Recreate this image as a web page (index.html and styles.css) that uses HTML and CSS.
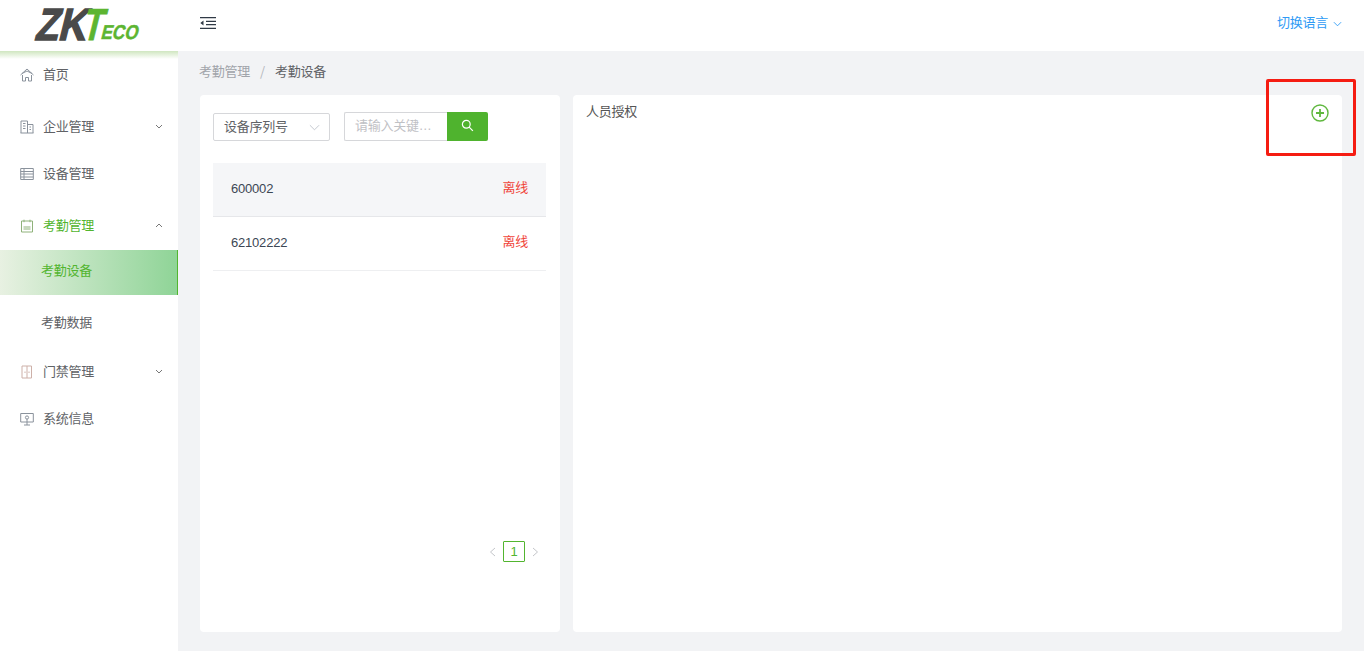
FILE: index.html
```html
<!DOCTYPE html>
<html lang="zh">
<head>
<meta charset="utf-8">
<title>考勤设备</title>
<link rel="stylesheet" href="styles.css">
</head>
<body>
<div class="app">
  <aside class="sidebar">
    <div class="logo">
      <svg width="178" height="51" viewBox="0 0 178 51">
        <g transform="translate(0 39.500) skewX(-14)">
          <text class="logo-zk" x="34" y="0" textLength="51" lengthAdjust="spacingAndGlyphs">ZK</text>
          <text class="logo-t" x="81" y="0" textLength="20" lengthAdjust="spacingAndGlyphs">T</text>
          <text class="logo-eco" x="100" y="-1" textLength="37" lengthAdjust="spacingAndGlyphs">ECO</text>
        </g>
      </svg>
    </div>
    <nav class="menu">
      <a class="item first">
        <svg class="ico" viewBox="0 0 14 14"><path d="M.5 7 7 1l6.500 6M2 5.500 7 3l5 2.500M2.500 7v6h3V9.500h3V13h3V7"/></svg><span class="label">首页</span>
      </a>
      <a class="item gap">
        <svg class="ico" viewBox="0 0 14 14"><path d="M1 13V1h6.500v12M7.500 4.500H13V13M.5 13h13M3 3.500h2.500M3 6h2.500M3 8.500h2.500M9.500 7h1.500M9.500 9.500h1.500"/></svg><span class="label">企业管理</span>
        <svg class="caret" viewBox="0 0 8 5"><path d="m1 1 3 3 3-3"/></svg>
      </a>
      <a class="item">
        <svg class="ico" viewBox="0 0 14 14"><path d="M.7 1.500h12.600v11H.7zM.7 4.500h12.600M.7 7h12.600M.7 10h12.600M4 1.500v11"/></svg><span class="label">设备管理</span>
      </a>
      <a class="item gap active">
        <svg class="ico" viewBox="0 0 14 14"><path d="M1.500 2h11v11h-11zM4 .7v2.500M10 .7v2.500M3.500 8h7M3.500 10h7"/></svg><span class="label">考勤管理</span>
        <svg class="caret" viewBox="0 0 8 5"><path d="m1 4 3-3 3 3"/></svg>
      </a>
      <a class="sub current">考勤设备</a>
      <a class="sub sub-plain">考勤数据</a>
      <a class="item tight">
        <svg class="ico ico-door" viewBox="0 0 14 14"><path d="M2 1h9.500v12H2zM7 1v12M5 6.500v1.500M9 6.500v1.500"/></svg><span class="label">门禁管理</span>
        <svg class="caret" viewBox="0 0 8 5"><path d="m1 1 3 3 3-3"/></svg>
      </a>
      <a class="item">
        <svg class="ico" viewBox="0 0 14 14"><path d="M.7 1.500h12.600v8.500H.7zM7 7v6M4 13h6"/><circle cx="7" cy="5.500" r="1.600"/></svg><span class="label">系统信息</span>
      </a>
    </nav>
  </aside>
  <div class="main">
    <header class="topbar">
      <svg class="fold" viewBox="0 0 16 12"><path d="M0 .7h16M6 4.300h10M6 7.700h10M0 11.300h16"/><path class="fold-arrow" d="M3.500 3.500v5L.3 6z"/></svg>
      <div class="lang"><span class="label">切换语言</span><svg class="lang-caret" viewBox="0 0 10 6"><path d="m1 1 4 4 4-4"/></svg></div>
    </header>
    <div class="content">
      <div class="crumbs"><span class="crumb-link">考勤管理</span><span class="crumb-sep">/</span><span class="crumb-now">考勤设备</span></div>
      <div class="panels">
        <section class="card left">
          <div class="filters">
            <div class="select"><span class="label">设备序列号</span><svg class="select-caret" viewBox="0 0 12 7"><path d="m1 1 5 5 5-5"/></svg></div>
            <div class="search">
              <div class="input">请输入关键…</div>
              <button class="search-btn" type="button"><svg viewBox="0 0 14 14"><circle cx="5.700" cy="5.700" r="4.200"/><path d="m8.800 8.800 4 4"/></svg></button>
            </div>
          </div>
          <ul class="devices">
            <li class="device selected"><span>600002</span><span class="off">离线</span></li>
            <li class="device"><span>62102222</span><span class="off">离线</span></li>
          </ul>
          <div class="pager">
            <svg class="pg-arrow" viewBox="0 0 7 10"><path d="M6 1 1.500 5 6 9"/></svg>
            <span class="pg-num">1</span>
            <svg class="pg-arrow" viewBox="0 0 7 10"><path d="m1 1 4.500 4L1 9"/></svg>
          </div>
        </section>
        <section class="card right">
          <div class="right-title">人员授权</div>
          <svg class="add" viewBox="0 0 18 18"><circle cx="9" cy="9" r="8"/><path class="add-plus" d="M9 5v8M5 9h8"/></svg>
        </section>
      </div>
    </div>
  </div>
  <div class="highlight"></div>
</div>
</body>
</html>
```
FILE: styles.css
```css
* { box-sizing: border-box; }
html, body { margin: 0; height: 100%; }
body {
  font-family: "Noto Sans CJK SC", "Liberation Sans", sans-serif;
  font-size: 13px;
  letter-spacing: -.25px;
  color: #606266;
  background: #f2f3f5;
  overflow: hidden;
}
.app { position: relative; display: flex; width: 1364px; height: 651px; }
.label { padding-bottom: 3px; }

.sidebar { width: 178px; background: #fff; flex: none; }
.logo { height: 51px; position: relative; }
.logo::after {
  content: ""; position: absolute; left: 0; right: 0; top: 51px; height: 8px;
  background: linear-gradient(180deg, rgba(130, 190, 90, .38), rgba(130, 190, 90, 0));
}
.logo svg { display: block; }
.logo-zk, .logo-t, .logo-eco { font-family: "Liberation Sans", sans-serif; font-weight: 700; letter-spacing: 0; }
.logo-zk { font-size: 45px; fill: #4a4a4a; stroke: #4a4a4a; stroke-width: 1.500; }
.logo-t { font-size: 45px; fill: #5cb531; stroke: #5cb531; stroke-width: .8; }
.logo-eco { font-size: 20px; fill: #5cb531; stroke: #5cb531; stroke-width: .5; }

.menu { display: flex; flex-direction: column; }
.item {
  display: flex; align-items: center; height: 46px; padding-left: 20px;
  color: #606266; position: relative;
}
.item.first { margin-top: 1px; }
.item.gap { margin-top: 6px; }
.item.tight { margin-top: 3px; }
.item + .item:not(.gap):not(.tight) { margin-top: 1px; }
.item.active { color: #52b52f; }
.ico {
  width: 14px; height: 14px; margin-right: 9px; flex: none;
  fill: none; stroke: #8a929c; stroke-width: 1;
}
.active .ico { stroke: #8fb27a; }
.ico-door { stroke: #cdb0a8; }
.caret {
  position: absolute; left: 155px; top: 20px; width: 8px; height: 5px;
  fill: none; stroke: #777; stroke-width: 1;
}
.sub { display: flex; align-items: center; height: 45px; padding: 0 0 6px 41px; margin-top: 1px; color: #606266; }
.sub.current {
  color: #52b52f;
  background: linear-gradient(90deg, #e8f1e2 0%, #8fd497 100%);
  border-right: 1px solid #52b52f;
}
.sub.sub-plain { height: 46px; margin-top: 5px; padding-bottom: 3px; }

.main { flex: 1; display: flex; flex-direction: column; min-width: 0; }
.topbar {
  height: 51px; background: #fff; display: flex; align-items: center;
  justify-content: space-between; padding: 0 22px 5px;
}
.fold { width: 16px; height: 12px; fill: none; stroke: #303a46; stroke-width: 1.200; }
.fold-arrow { fill: #303a46; stroke: none; }
.lang { color: #2e9bf5; display: flex; align-items: center; gap: 5px; }
.lang .label { padding-bottom: 4px; }
.lang-caret { width: 9px; height: 6px; margin-top: 1px; fill: none; stroke: #2e9bf5; stroke-width: 1; }

.content { flex: 1; padding: 0 22px 19px 21px; display: flex; flex-direction: column; }
.crumbs { height: 44px; display: flex; align-items: center; padding-bottom: 5px; }
.crumb-link { color: #a1a4aa; }
.crumb-sep { color: #b4b7bc; margin: 0 10px; }
.crumb-now { color: #606266; }
.panels { flex: 1; display: flex; gap: 13px; padding-left: 1px; }
.card { background: #fff; border-radius: 4px; position: relative; }
.left { width: 360px; padding: 17px 14px 0 13px; display: flex; flex-direction: column; }
.right { flex: 1; padding: 6px 13px; }
.right-title { color: #555; line-height: 20px; }
.add {
  position: absolute; right: 13px; top: 9px; width: 18px; height: 18px;
  fill: none; stroke: #60b83f; stroke-width: 1.400;
}
.add-plus { stroke-width: 1.800; }

.filters { display: flex; align-items: flex-start; }
.select {
  width: 117px; height: 28px; margin-top: 1px; border: 1px solid #d6d7da; border-radius: 2px;
  display: flex; align-items: center; justify-content: space-between;
  padding: 0 10px 0 10px; color: #606266;
}
.select-caret { width: 11px; height: 7px; margin-right: -1px; fill: none; stroke: #c0c4cc; stroke-width: 1; }
.search { display: flex; margin-left: 14px; height: 29px; }
.input {
  width: 103px; height: 29px; border: 1px solid #d6d7da; border-right: 0; border-radius: 2px 0 0 2px;
  padding-left: 10px; color: #bfc1c5; line-height: 26px;
  font-family: "Liberation Sans", "Noto Sans CJK SC", sans-serif;
}
.search-btn {
  width: 41px; height: 29px; border: 0; padding: 0; background: #4fb32e; border-radius: 0 2px 2px 0;
  display: flex; align-items: center; justify-content: center;
}
.search-btn svg { width: 13px; height: 13px; margin-top: -2px; fill: none; stroke: #fff; stroke-width: 1.300; }

.devices { list-style: none; margin: 22px 0 0; padding: 0; }
.device {
  height: 54px; display: flex; align-items: center; justify-content: space-between;
  padding: 0 18px 3px; border-bottom: 1px solid #eeeff1; color: #3c4654;
  font-family: "Liberation Sans", "Noto Sans CJK SC", sans-serif; letter-spacing: -.2px;
}
.device.selected { background: #f5f6f8; border-bottom-color: #e6e7ea; }
.off { color: #f0453a; font-family: "Noto Sans CJK SC", sans-serif; letter-spacing: -.25px; padding-bottom: 3px; }

.pager { display: flex; align-items: center; margin-top: 270px; align-self: flex-end; margin-right: 7px; gap: 6px; }
.pg-arrow { width: 7px; height: 10px; fill: none; stroke: #c4c6ca; stroke-width: 1; }
.pg-num {
  width: 22px; height: 21px; border: 1px solid #52b52f; border-radius: 1px;
  color: #52b52f; text-align: center;
  font: 400 13px/19px "Liberation Sans", sans-serif;
  margin: 0 1px;
}

.highlight {
  position: absolute; left: 1266px; top: 79px; width: 90px; height: 77px;
  border: 3px solid #f51c12; border-radius: 2px; pointer-events: none;
}
```
